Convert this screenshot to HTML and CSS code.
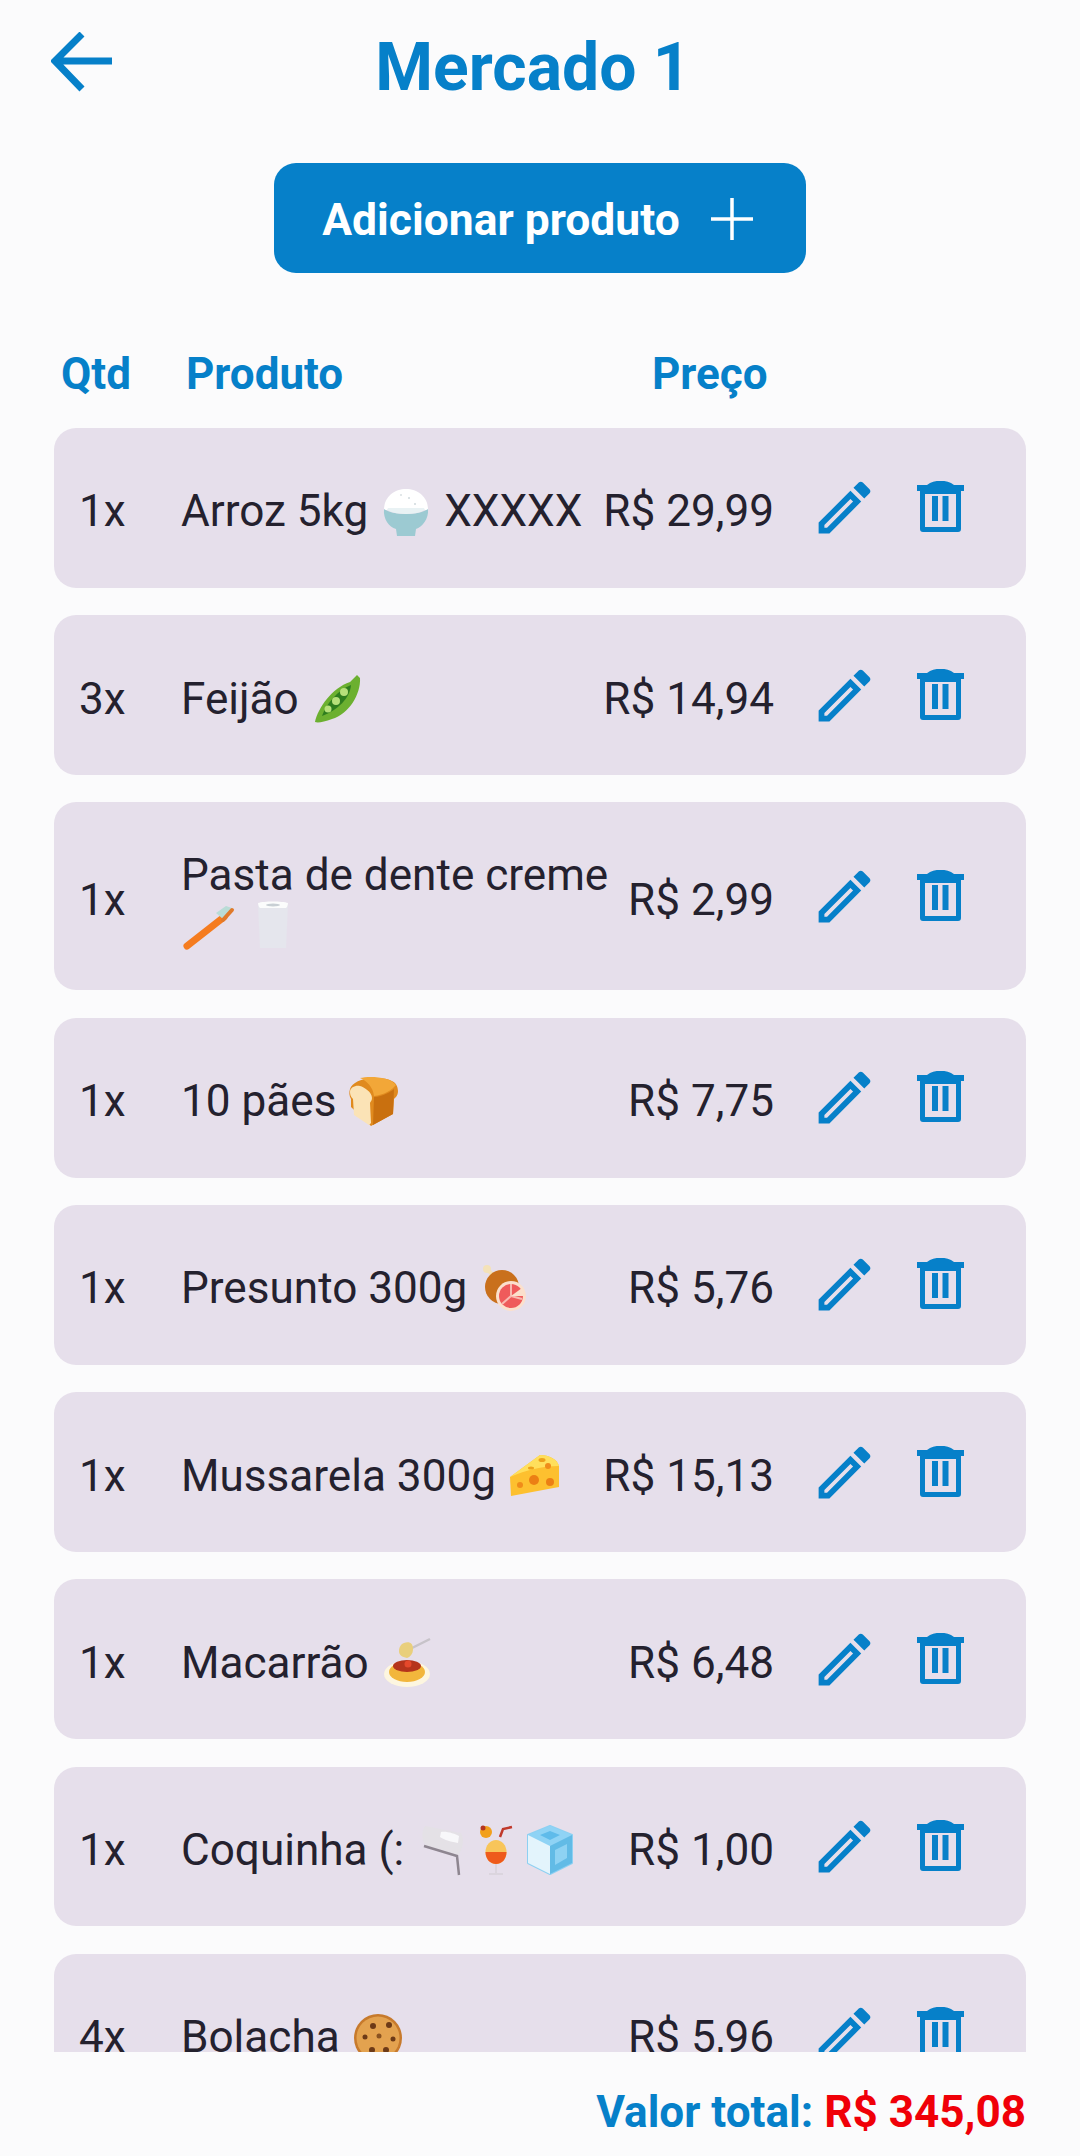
FILE: index.html
```html
<!DOCTYPE html>
<html lang="pt-BR">
<head>
<meta charset="utf-8">
<title>Mercado 1</title>
<link rel="stylesheet" href="styles.css">
</head>
<body>
<svg class="defs" aria-hidden="true">
  <defs>
    <symbol id="i-edit" viewBox="0 0 24 24"><path d="M14.06 9.02l.92.92L5.92 19H5v-.92l9.06-9.06M17.66 3c-.25 0-.51.1-.7.29l-1.83 1.83 3.75 3.75 1.83-1.83c.39-.39.39-1.02 0-1.41l-2.34-2.34c-.2-.2-.45-.29-.71-.29zm-3.6 3.19L3 17.25V21h3.75L17.81 9.94l-3.75-3.75z"/></symbol>
    <symbol id="i-trash" viewBox="0 0 47 51"><path d="M13 2c6-3 15-3 21 0l3 2h10v6H0V4h10z"/><path fill-rule="evenodd" d="M3 8h41v40c0 2-1 3-3 3H6c-2 0-3-1-3-3zM8 13v33h31V13z"/><rect x="15" y="15" width="6" height="25"/><rect x="25.500" y="15" width="6" height="25"/></symbol>
    <symbol id="e-bowl" viewBox="0 0 54 54"><path d="M5 25C5 11 16 4 27 4s22 7 22 21z" fill="#fff"/><path d="M5 24c0 0 6 5 22 5s22-5 22-5c1 10-6 18-12 20l-1 7H18l-1-7C10 42 4 34 5 24z" fill="#9ccad2"/><path d="M8 25c6 3 13 4 19 4s13-1 19-4l-1-2H9z" fill="#e9f2f4"/><circle cx="30" cy="13" r="1" fill="#cfd8dc"/><circle cx="36" cy="19" r="1" fill="#cfd8dc"/><circle cx="22" cy="10" r="1" fill="#d9dfe2"/></symbol>
    <symbol id="e-pea" viewBox="0 0 54 54"><path d="M5 50C8 36 22 16 40 10l7-7 3 3c1 16-11 36-28 41-8 3-14 4-17 3z" fill="#6cb030"/><path d="M12 44c4-12 16-26 29-31-1 13-13 25-29 31z" fill="#2e7d1e"/><circle cx="34" cy="20" r="4" fill="#b6e07a"/><circle cx="26" cy="29" r="4" fill="#b6e07a"/><circle cx="18" cy="37" r="3.500" fill="#b6e07a"/></symbol>
    <symbol id="e-brush" viewBox="0 0 54 54"><path d="M6 48L43 19" stroke="#f57c1f" stroke-width="7" stroke-linecap="round"/><path d="M35 15l10-7 6 2-9 11z" fill="#b9dcd6"/><path d="M42 22l9-10" stroke="#e07a2a" stroke-width="4" stroke-linecap="round"/></symbol>
    <symbol id="e-glass" viewBox="0 0 54 54"><path d="M12 6h30l-2 44H14z" fill="#e5e6ed"/><path d="M12 5c6-2 24-2 30 0 0 3-2 5-2 5H14s-2-2-2-5z" fill="#fbfcfc"/><ellipse cx="27" cy="7" rx="7" ry="1.500" fill="#c8cfd4"/></symbol>
    <symbol id="e-bread" viewBox="0 0 54 54"><path d="M3 14C5 8 14 3 27 3s24 2 24 13c0 5-3 7-4 8l-1 15-22 12-3-3L4 32V24C2 21 2 17 3 14z" fill="#e08a1e"/><path d="M3 17c0-5 6-7 10-6s12 6 12 12c0 3-2 4-2 5l1 20-2 2L7 40 6 24c-2-2-3-4-3-7z" fill="#fbe3b6"/><path d="M27 22c8 0 18-6 20-8l-1 25-20 11z" fill="#c9700f"/><path d="M13 3c8-2 30-2 36 7-4 5-12 10-22 11C26 12 20 6 13 3z" fill="#f2a738"/></symbol>
    <symbol id="e-ham" viewBox="0 0 54 54"><circle cx="9" cy="7" r="4" fill="#f4e2b8"/><path d="M11 9l6 7" stroke="#f4e2b8" stroke-width="4"/><ellipse cx="24" cy="25" rx="17" ry="17" fill="#c9701c"/><circle cx="33" cy="34" r="15" fill="#fbe0cc"/><circle cx="33" cy="34" r="12" fill="#ef5b5b"/><path d="M33 22v12M33 34l11 3M33 34l-9 8" stroke="#f9b9b0" stroke-width="2"/><path d="M33 34l11-8 3 8z" fill="#fbe0cc"/></symbol>
    <symbol id="e-cheese" viewBox="0 0 54 54"><path d="M3 28L33 6c9 0 17 4 19 11v21L4 47z" fill="#fdc02f"/><path d="M3 28L33 6c9 0 17 4 19 11-18 0-32 4-49 11z" fill="#ffdf5c"/><ellipse cx="35" cy="11" rx="3.500" ry="2" fill="#eda11a"/><ellipse cx="24" cy="19" rx="3" ry="1.500" fill="#eda11a"/><circle cx="13" cy="36" r="3" fill="#f08c1a"/><circle cx="27" cy="31" r="5" fill="#ec7f14"/><circle cx="43" cy="33" r="4" fill="#ec7f14"/><circle cx="41" cy="17" r="3" fill="#f08c1a"/></symbol>
    <symbol id="e-pasta" viewBox="0 0 54 54"><path d="M30 13L50 3" stroke="#c7c3c9" stroke-width="2.500"/><path d="M24 7c6-2 9 1 9 6s-3 8-6 9c-5-1-8-3-8-7s2-7 5-8z" fill="#e9cf7c"/><ellipse cx="27" cy="38" rx="23" ry="13" fill="#fdf6e0"/><ellipse cx="27" cy="36" rx="18" ry="10" fill="#f2b63c"/><ellipse cx="27" cy="30" rx="14" ry="6" fill="#b5341b"/><circle cx="28" cy="28" r="3.500" fill="#e5482a"/></symbol>
    <symbol id="e-flag" viewBox="0 0 54 54"><path d="M10 3l36 7c4 8 1 15-2 22L10 22C6 15 7 8 10 3z" fill="#e4e1e6"/><path d="M26 9c6-1 14 2 18 4l-1 7c-6-1-14-3-18-6z" fill="#f8f8fa"/><path d="M9 23l33 10 2 19" fill="none" stroke="#8e8690" stroke-width="2.500"/></symbol>
    <symbol id="e-drink" viewBox="0 0 54 54"><circle cx="17" cy="9" r="6" fill="#f2a01c"/><circle cx="14" cy="5" r="2.500" fill="#b43520"/><path d="M31 14l3-8 9-2" fill="none" stroke="#c0392b" stroke-width="2.500"/><ellipse cx="27" cy="29" rx="10.500" ry="12" fill="#f8c55a"/><path d="M16.500 29h21c0 7-4.500 12-10.500 12S16.500 36 16.500 29z" fill="#ee5a1c"/><path d="M27 41v9M20 51h14" stroke="#dbd5de" stroke-width="2"/></symbol>
    <symbol id="e-ice" viewBox="0 0 54 54"><path d="M27 3l22 9v28L27 51 5 40V12z" fill="#8dd0f2" stroke="#8dd0f2" stroke-linejoin="round" stroke-width="2"/><path d="M5 12L27 3l22 9-22 11z" fill="#8fd3f5"/><path d="M17 12l10-4 10 4-10 5z" fill="#5fbbea"/><path d="M5 12l22 11v28L5 40z" fill="#e3f4fc"/><path d="M27 23l22-11v28L27 51z" fill="#62bbe6"/><path d="M32 27l12-6v14l-12 7z" fill="#8ed2f3"/></symbol>
    <symbol id="e-cookie" viewBox="0 0 54 54"><circle cx="27" cy="27" r="24" fill="#c77a2c"/><circle cx="27" cy="27" r="21.500" fill="#e3a24f"/><circle cx="22" cy="15" r="3" fill="#6d3a17"/><circle cx="38" cy="14" r="3" fill="#6d3a17"/><circle cx="14" cy="26" r="2.500" fill="#6d3a17"/><circle cx="28" cy="25" r="2.500" fill="#8a5220"/><circle cx="42" cy="28" r="2.500" fill="#6d3a17"/><circle cx="21" cy="39" r="3" fill="#6d3a17"/><circle cx="35" cy="39" r="3" fill="#6d3a17"/></symbol>
  </defs>
</svg>

<div class="screen">
  <header class="topbar">
    <svg class="back" viewBox="0 0 62 60" aria-label="Voltar"><path d="M61 29H6M31 2L4 29l27 28" fill="none" stroke-width="7"/></svg>
    <h1 class="title">Mercado 1</h1>
  </header>

  <div class="action">
    <button class="add" type="button">
      <span>Adicionar produto</span>
      <svg class="plus" viewBox="0 0 42 42"><path d="M21 0v42M0 21h42" stroke-width="3.500"/></svg>
    </button>
  </div>

  <div class="heads">
    <span class="head-qty">Qtd</span>
    <span class="head-name">Produto</span>
    <span class="head-price">Preço</span>
  </div>

  <main class="list">
    <article class="row">
      <span class="qty">1x</span>
      <span class="name">Arroz 5kg <svg class="emoji"><use href="#e-bowl"/></svg> XXXXX</span>
      <span class="price"><span>R$ 29,99</span></span>
      <span class="tools"><svg class="edit"><use href="#i-edit"/></svg><svg class="trash"><use href="#i-trash"/></svg></span>
    </article>
    <article class="row">
      <span class="qty">3x</span>
      <span class="name">Feijão <svg class="emoji"><use href="#e-pea"/></svg></span>
      <span class="price"><span>R$ 14,94</span></span>
      <span class="tools"><svg class="edit"><use href="#i-edit"/></svg><svg class="trash"><use href="#i-trash"/></svg></span>
    </article>
    <article class="row">
      <span class="qty">1x</span>
      <span class="name">Pasta de dente creme <svg class="emoji"><use href="#e-brush"/></svg> <svg class="emoji"><use href="#e-glass"/></svg></span>
      <span class="price"><span>R$ 2,99</span></span>
      <span class="tools"><svg class="edit"><use href="#i-edit"/></svg><svg class="trash"><use href="#i-trash"/></svg></span>
    </article>
    <article class="row">
      <span class="qty">1x</span>
      <span class="name">10 pães <svg class="emoji"><use href="#e-bread"/></svg></span>
      <span class="price"><span>R$ 7,75</span></span>
      <span class="tools"><svg class="edit"><use href="#i-edit"/></svg><svg class="trash"><use href="#i-trash"/></svg></span>
    </article>
    <article class="row">
      <span class="qty">1x</span>
      <span class="name">Presunto 300g <svg class="emoji"><use href="#e-ham"/></svg></span>
      <span class="price"><span>R$ 5,76</span></span>
      <span class="tools"><svg class="edit"><use href="#i-edit"/></svg><svg class="trash"><use href="#i-trash"/></svg></span>
    </article>
    <article class="row">
      <span class="qty">1x</span>
      <span class="name">Mussarela 300g <svg class="emoji"><use href="#e-cheese"/></svg></span>
      <span class="price"><span>R$ 15,13</span></span>
      <span class="tools"><svg class="edit"><use href="#i-edit"/></svg><svg class="trash"><use href="#i-trash"/></svg></span>
    </article>
    <article class="row">
      <span class="qty">1x</span>
      <span class="name">Macarrão <svg class="emoji"><use href="#e-pasta"/></svg></span>
      <span class="price"><span>R$ 6,48</span></span>
      <span class="tools"><svg class="edit"><use href="#i-edit"/></svg><svg class="trash"><use href="#i-trash"/></svg></span>
    </article>
    <article class="row">
      <span class="qty">1x</span>
      <span class="name">Coquinha (: <svg class="emoji"><use href="#e-flag"/></svg><svg class="emoji"><use href="#e-drink"/></svg><svg class="emoji"><use href="#e-ice"/></svg></span>
      <span class="price"><span>R$ 1,00</span></span>
      <span class="tools"><svg class="edit"><use href="#i-edit"/></svg><svg class="trash"><use href="#i-trash"/></svg></span>
    </article>
    <article class="row">
      <span class="qty">4x</span>
      <span class="name">Bolacha <svg class="emoji"><use href="#e-cookie"/></svg></span>
      <span class="price"><span>R$ 5,96</span></span>
      <span class="tools"><svg class="edit"><use href="#i-edit"/></svg><svg class="trash"><use href="#i-trash"/></svg></span>
    </article>
  </main>

  <footer class="total">Valor total: <strong class="total-value">R$ 345,08</strong></footer>
</div>
</body>
</html>
```

FILE: styles.css
```css
* { box-sizing: border-box; }
html, body { margin: 0; padding: 0; }
body {
  background: #fbfbfc;
  font-family: Roboto, "Noto Sans", sans-serif;
  color: #24212e;
}
.defs { position: absolute; width: 0; height: 0; }
.screen {
  width: 1080px;
  height: 2156px;
  display: flex;
  flex-direction: column;
  overflow: hidden;
}
.topbar {
  height: 130px;
  padding: 6px 14px 0 0;
  position: relative;
  display: flex;
  justify-content: center;
  align-items: center;
}
.back {
  position: absolute;
  left: 51px;
  top: 32px;
  width: 62px;
  height: 60px;
  stroke: #0680c9;
}
.title {
  margin: 0;
  font-size: 66px;
  font-weight: 700;
  color: #0680c9;
  line-height: 1;
}
.action {
  display: flex;
  justify-content: center;
  padding-top: 33px;
}
.add {
  width: 532px;
  height: 110px;
  border: 0;
  border-radius: 22px;
  background: #0680c9;
  color: #fff;
  font-family: inherit;
  font-size: 44.400px;
  font-weight: 700;
  display: flex;
  align-items: center;
  justify-content: center;
  gap: 31px;
  padding: 4px 5px 0 0;
}
.plus { width: 42px; height: 42px; stroke: #fff; margin-top: -2px; }
.heads {
  display: flex;
  height: 72px;
  margin-top: 65px;
  align-items: center;
  font-size: 44px;
  font-weight: 700;
  color: #0680c9;
  position: relative;
}
.head-qty { margin-left: 61px; width: 125px; }
.head-name { width: 466px; }
.list {
  margin: 0 54px;
  height: 1642px;
  padding-top: 18px;
  display: flex;
  flex-direction: column;
  gap: 27.400px;
  overflow: hidden;
  flex: none;
}
.row {
  flex: none;
  min-height: 159.800px;
  padding: 40.500px 0 40.500px 25px;
  border-radius: 22px;
  background: #e6dfeb;
  display: flex;
  align-items: center;
  font-size: 44.100px;
  line-height: 50px;
}
.qty { width: 102px; flex: none; padding-top: 7px; }
.name { width: 436px; flex: none; padding-top: 7px; }
.price {
  width: 157px;
  flex: none;
  display: flex;
  justify-content: flex-end;
  white-space: nowrap;
  padding-top: 7px;
}
.emoji {
  width: 54px;
  height: 54px;
  margin: -6px 0;
  vertical-align: -6.500px;
}
.tools {
  flex: none;
  margin-left: 36px;
  display: flex;
  align-items: center;
  gap: 38px;
  fill: #0680c9;
}
.edit { width: 69px; height: 69px; }
.trash { width: 47px; height: 51px; margin-top: -2px; }
.total {
  flex: none;
  padding: 35px 54px 0 0;
  text-align: right;
  font-size: 44.100px;
  line-height: 50px;
  font-weight: 700;
  color: #0680c9;
}
.total-value { color: #f00008; font-weight: 700; }
```
